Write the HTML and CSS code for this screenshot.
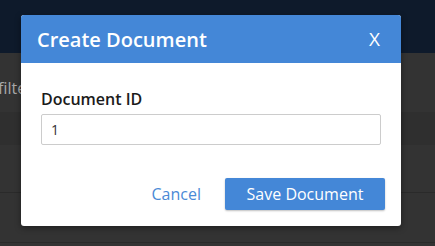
FILE: index.html
```html
<!DOCTYPE html>
<html lang="en">
<head>
  <meta charset="UTF-8">
  <title>Create Document</title>
  <link rel="stylesheet" href="styles.css">
</head>
<body>
  <div class="topbar"></div>
  <div class="page">
    <div class="filter">filter</div>
    <div class="row head"></div>
    <div class="row"></div>
    <div class="row last"></div>
  </div>

  <div class="modal">
    <div class="modal-header">
      <h2>Create Document</h2>
      <span class="close">X</span>
    </div>
    <div class="modal-body">
      <label for="docId">Document ID</label>
      <input type="text" id="docId" value="1">
    </div>
    <div class="modal-footer">
      <button class="link">Cancel</button>
      <button class="primary">Save Document</button>
    </div>
  </div>
</body>
</html>
```

FILE: styles.css
```css
* {
  margin: 0;
  padding: 0;
  box-sizing: border-box;
  font-family: 'Open Sans', sans-serif;
}

body {
  background: #333333;
  min-height: 100vh;
  overflow: hidden;
}

.topbar {
  height: 53px;
  background: #0e1a2b;
}

.page {
  padding-top: 24px;
}

.filter {
  color: #a8a8a8;
  font-size: 16px;
  margin-left: -2px;
  height: 35px;
}

.row {
  height: 48px;
  border-bottom: 1px solid #2a2a2a;
}

.row.head {
  height: 33px;
  background: #2f2f2f;
  border-bottom: 0;
}

.row.last {
  height: 50px;
}

.modal {
  position: absolute;
  left: 21px;
  top: 15px;
  width: 380px;
  height: 211px;
  background: #ffffff;
  border-radius: 3px;
  overflow: hidden;
  box-shadow: 0 2px 6px rgba(0, 0, 0, 0.4);
  display: flex;
  flex-direction: column;
}

.modal-header {
  height: 48px;
  background: #4487d7;
  display: flex;
  align-items: center;
  justify-content: space-between;
  padding: 0 21px 0 16px;
  color: #ffffff;
}

.modal-header h2 {
  font-size: 20px;
  font-weight: 600;
}

.close {
  font-size: 19px;
  font-weight: 400;
}

.modal-body {
  padding: 25px 20px 0;
  display: flex;
  flex-direction: column;
}

.modal-body label {
  font-size: 16px;
  font-weight: 600;
  color: #1b1b1b;
  line-height: 23px;
  margin-bottom: 3px;
}

.modal-body input {
  height: 31px;
  border: 1px solid #cccccc;
  border-radius: 2px;
  padding: 0 9px;
  font-size: 14px;
  color: #333333;
  outline: none;
}

.modal-footer {
  display: flex;
  justify-content: flex-end;
  align-items: center;
  gap: 24px;
  padding: 33px 16px 0;
}

.modal-footer button {
  border: 0;
  background: none;
  font-size: 16px;
  cursor: pointer;
}

.link {
  color: #4a8ad6;
}

.primary {
  width: 160px;
  height: 32px;
  border-radius: 2px;
  background: #4487d7 !important;
  color: #ffffff;
  box-shadow: 0 1px 2px rgba(0, 0, 0, 0.25);
}
```
